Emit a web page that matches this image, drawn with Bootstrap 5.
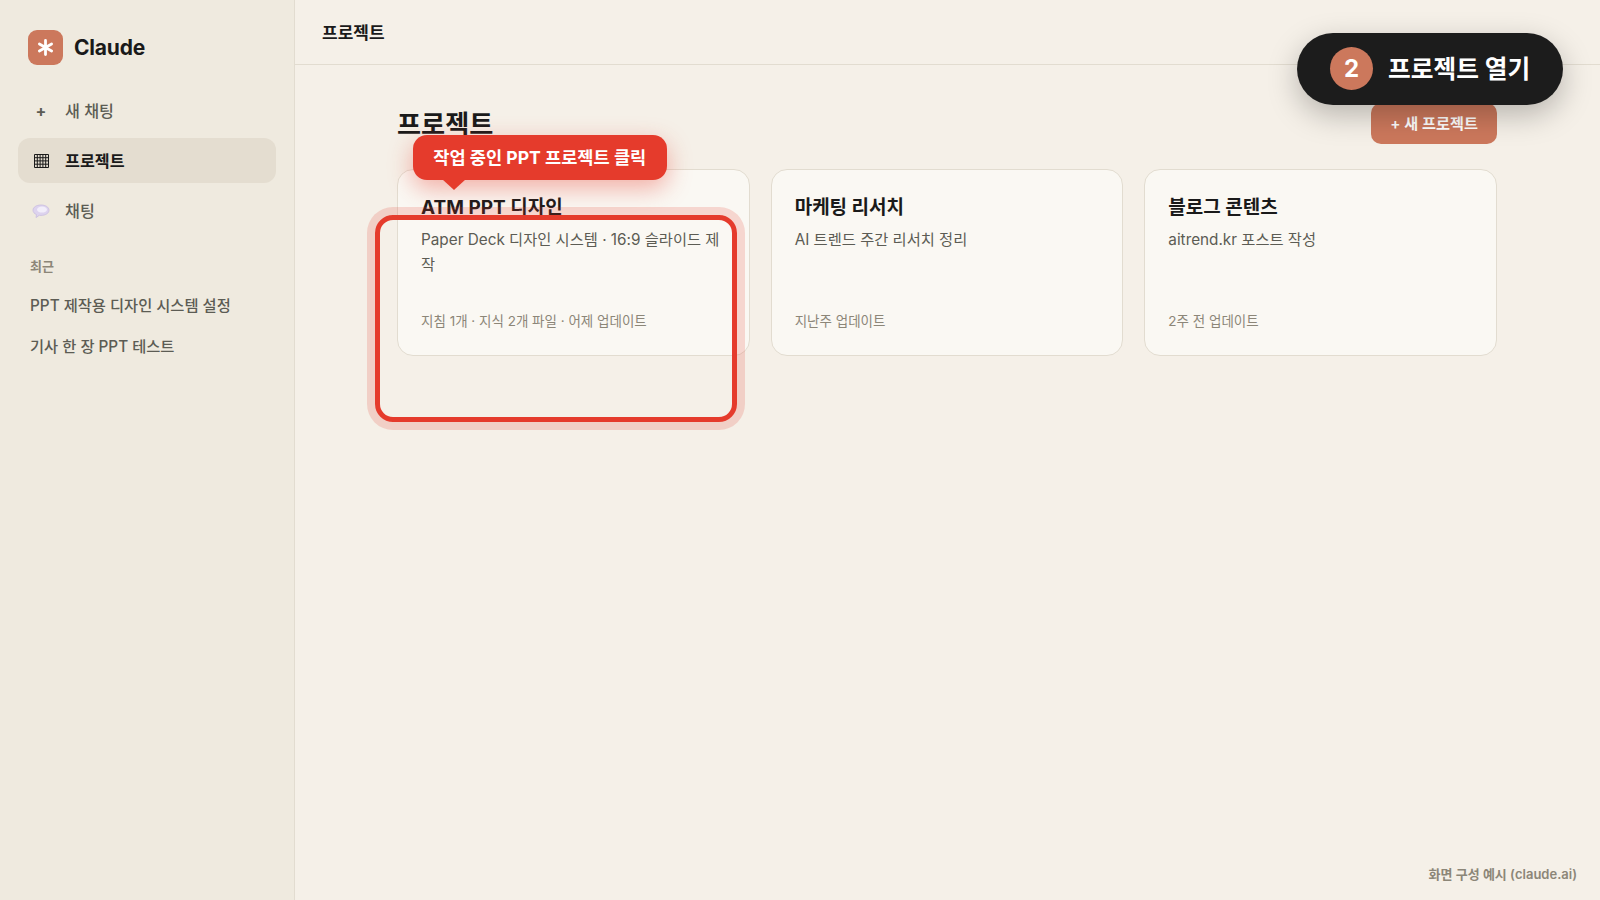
<!DOCTYPE html>
<html lang="ko">
<head>
<meta charset="utf-8">
<title>Claude 프로젝트</title>
<link href="https://cdn.jsdelivr.net/npm/bootstrap@5.3.0/dist/css/bootstrap.min.css" rel="stylesheet">
<style>
html,body{height:100%}
body{font-family:Inter,"Noto Sans CJK KR",sans-serif;background:#f5f0e8;color:#1a1a1a;overflow:hidden}
.app-shell{height:900px;width:1600px;position:relative}
.side-bar{width:295px;flex:none;background:#efeadf;border-right:1px solid #e2dcd0;padding:30px 18px 0}
.logo-row{padding-left:9.500px;gap:11.500px;height:36px;margin-bottom:22px;align-items:flex-start}
.logo-box{width:35px;height:35px;border-radius:9px;background:#cc785c;display:flex;align-items:center;justify-content:center}
.logo-name{font-size:21px;font-weight:700;letter-spacing:-.2px;line-height:35px}
.side-link{height:45px;border-radius:12px;padding-left:14px;padding-top:1px;gap:15px;font-size:16.2px;font-weight:500;color:#5c5c54;margin-bottom:5px}
.side-link.on{background:#e4ddd0;color:#1a1a1a;font-weight:600}
.side-icon{width:18px;display:flex;justify-content:center;align-items:center;font-size:16px;font-weight:700}
.recent-head{font-size:13px;font-weight:600;color:#8c8678;padding-left:12px;margin-top:23px;margin-bottom:19px;line-height:20px}
.recent-item{font-size:15.3px;font-weight:500;color:#5c5c54;padding-left:12px;line-height:22px;margin-bottom:19px}
.main-area{min-width:0}
.top-strip{height:65px;border-bottom:1px solid #e2dcd0;padding-left:27px;padding-top:3px;font-size:17px;font-weight:600}
.page-pad{padding:38px 103px 0 102px}
.page-title{font-size:26.2px;font-weight:700;line-height:40px;margin:0;padding-top:2px}
.new-btn{background:#cc785c;color:#fff;border:0;border-radius:10px;font-size:15.2px;font-weight:600;height:41px;width:126px;padding:1px 0 0}
.head-row{height:41px;margin-bottom:25px}
.cards-grid{display:grid;grid-template-columns:repeat(3,1fr);gap:21px}
.proj-card{height:187px;background:#faf8f3;border:1px solid #e2dcd0;border-radius:16px;padding:24px 23px 22px;position:relative}
.proj-name{font-size:19px;font-weight:700;line-height:28px;margin:0 0 6px}
.proj-desc{font-size:15.300px;color:#5c5c54;line-height:24.5px;margin:0}
.proj-meta{position:absolute;left:23px;bottom:24px;font-size:13.5px;color:#8c8678;line-height:20px}
.hl-frame{position:absolute;left:375px;top:215px;width:362px;height:207px;border:5px solid #e53b2c;border-radius:18px;box-shadow:0 0 0 8px rgba(229,59,44,.18)}
.tip-box{position:absolute;left:412.500px;top:135px;width:254.500px;height:45px;padding-top:1px;background:#e53b2c;color:#fff;border-radius:14px;font-size:17.6px;font-weight:700;display:flex;align-items:center;justify-content:center;box-shadow:0 8px 24px rgba(229,59,44,.4)}
.tip-box::after{content:"";position:absolute;left:29px;bottom:-10px;border-left:12px solid transparent;border-right:12px solid transparent;border-top:11px solid #e53b2c}
.step-pill{position:absolute;left:1297px;top:32.500px;width:265.500px;height:72px;background:#1c1c1c;color:#fff;border-radius:37px;padding-left:33px;gap:15px;font-size:24.7px;font-weight:700;box-shadow:0 10px 30px rgba(0,0,0,.25)}
.step-label{padding-top:3px}
.step-num{width:43px;height:43px;border-radius:50%;background:#cc785c;display:flex;align-items:center;justify-content:center;font-size:24px;font-weight:700}
.foot-note{position:absolute;right:23px;bottom:16px;font-size:13px;font-weight:600;color:#8c8678;line-height:20px}
</style>
</head>
<body>
<div class="app-shell d-flex">
  <aside class="side-bar">
    <div class="logo-row d-flex">
      <div class="logo-box">
        <svg width="17" height="17" viewBox="0 0 17 17" fill="none" stroke="#fff" stroke-width="2.8" stroke-linecap="round"><path d="M8.5 1.500v14M2.400 5l12.200 7M14.600 5L2.400 12"/></svg>
      </div>
      <span class="logo-name">Claude</span>
    </div>
    <div class="side-link d-flex align-items-center"><span class="side-icon">+</span><span>새 채팅</span></div>
    <div class="side-link on d-flex align-items-center">
      <span class="side-icon">
        <svg width="15" height="14" viewBox="0 0 15 14" fill="none" stroke="#1a1a1a" stroke-width="1"><path d="M.5.5h14v13H.5zM.5 3.700h14M.5 6.900h14M.5 10.200h14M3.300.5v13M6.100.5v13M8.900.5v13M11.700.5v13"/></svg>
      </span><span>프로젝트</span>
    </div>
    <div class="side-link d-flex align-items-center">
      <span class="side-icon">
        <svg width="18" height="15" viewBox="0 0 18 15"><path d="M9 1c4.600 0 8 2.200 8 5.200s-3.400 5.200-8 5.200c-.6 0-1.200 0-1.700-.1L4 13.600l.5-3C2.300 9.700 1 8.100 1 6.200 1 3.200 4.400 1 9 1z" fill="#ddd3ee" stroke="#c9bde0" stroke-width=".8"/><ellipse cx="10" cy="5.600" rx="5" ry="3" fill="#f2eefa"/></svg>
      </span><span>채팅</span>
    </div>
    <div class="recent-head">최근</div>
    <div class="recent-item">PPT 제작용 디자인 시스템 설정</div>
    <div class="recent-item">기사 한 장 PPT 테스트</div>
  </aside>
  <main class="main-area flex-grow-1">
    <div class="top-strip d-flex align-items-center">프로젝트</div>
    <div class="page-pad">
      <div class="head-row d-flex justify-content-between align-items-center">
        <h1 class="page-title">프로젝트</h1>
        <button type="button" class="btn new-btn">+ 새 프로젝트</button>
      </div>
      <div class="cards-grid">
        <div class="proj-card">
          <h2 class="proj-name">ATM PPT 디자인</h2>
          <p class="proj-desc">Paper Deck 디자인 시스템 · 16:9 슬라이드 제작</p>
          <div class="proj-meta">지침 1개 · 지식 2개 파일 · 어제 업데이트</div>
        </div>
        <div class="proj-card">
          <h2 class="proj-name">마케팅 리서치</h2>
          <p class="proj-desc">AI 트렌드 주간 리서치 정리</p>
          <div class="proj-meta">지난주 업데이트</div>
        </div>
        <div class="proj-card">
          <h2 class="proj-name">블로그 콘텐츠</h2>
          <p class="proj-desc">aitrend.kr 포스트 작성</p>
          <div class="proj-meta">2주 전 업데이트</div>
        </div>
      </div>
    </div>
  </main>
  <div class="hl-frame"></div>
  <div class="tip-box">작업 중인 PPT 프로젝트 클릭</div>
  <div class="step-pill d-flex align-items-center"><span class="step-num">2</span><span class="step-label">프로젝트 열기</span></div>
  <div class="foot-note">화면 구성 예시 (claude.ai)</div>
</div>
<script src="https://cdn.jsdelivr.net/npm/bootstrap@5.3.0/dist/js/bootstrap.bundle.min.js"></script>
</body>
</html>
